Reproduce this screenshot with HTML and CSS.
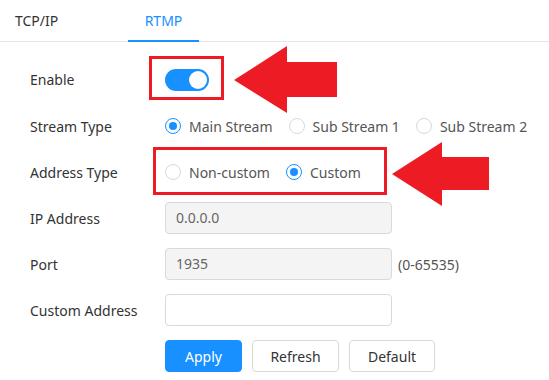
FILE: index.html
```html
<!DOCTYPE html>
<html>
<head>
<meta charset="utf-8">
<link rel="stylesheet" href="styles.css">
</head>
<body>
<div class="page">
  <div class="tabs">
    <div class="tab tab-first">TCP/IP</div>
    <div class="tab tab-active">RTMP</div>
  </div>
  <div class="form">
    <div class="row row-first">
      <div class="label">Enable</div>
      <div class="control"><span class="switch"><span class="knob"></span></span></div>
    </div>
    <div class="row">
      <div class="label">Stream Type</div>
      <div class="control radios">
        <span class="radio checked"><span class="dot"></span></span><span class="rtext">Main Stream</span>
        <span class="radio"></span><span class="rtext">Sub Stream 1</span>
        <span class="radio"></span><span class="rtext">Sub Stream 2</span>
      </div>
    </div>
    <div class="row">
      <div class="label">Address Type</div>
      <div class="control radios">
        <span class="radio"></span><span class="rtext">Non-custom</span>
        <span class="radio checked"><span class="dot"></span></span><span class="rtext">Custom</span>
      </div>
    </div>
    <div class="row">
      <div class="label">IP Address</div>
      <div class="control"><div class="input disabled">0.0.0.0</div></div>
    </div>
    <div class="row">
      <div class="label">Port</div>
      <div class="control"><div class="input disabled">1935</div><span class="hint">(0-65535)</span></div>
    </div>
    <div class="row">
      <div class="label">Custom Address</div>
      <div class="control"><div class="input"></div></div>
    </div>
    <div class="row buttons-row">
      <div class="label"></div>
      <div class="control buttons">
        <button class="btn btn-primary">Apply</button>
        <button class="btn">Refresh</button>
        <button class="btn">Default</button>
      </div>
    </div>
  </div>
  <svg class="annot" width="549" height="380" viewBox="0 0 549 380">
    <rect x="150.5" y="57.5" width="72" height="41" fill="none" stroke="#ed1c24" stroke-width="3"/>
    <rect x="154.5" y="148.5" width="231" height="45" fill="none" stroke="#ed1c24" stroke-width="3"/>
    <polygon points="234,80 287,46 287,62 337,62 337,97 287,97 287,113" fill="#ed1c24"/>
    <polygon points="392,174 442,142 442,157 489,157 489,190 442,190 442,206" fill="#ed1c24"/>
  </svg>
</div>
</body>
</html>
```

FILE: styles.css
```css
* { box-sizing: border-box; }
html, body { margin: 0; padding: 0; background: #fff; }
body {
  font-family: "Noto Sans", "Open Sans", sans-serif;
  font-size: 14px;
  color: #333;
}
.page { position: relative; width: 549px; height: 380px; overflow: hidden; }
.tabs {
  display: flex;
  height: 42px;
  border-bottom: 1px solid #e8e8e8;
  gap: 55px;
}
.tab {
  height: 42px;
  line-height: 42px;
  text-align: center;
  color: #333;
}
.tab-first { width: 73px; }
.tab-active {
  width: 71px;
  color: #1890ff;
  border-bottom: 2px solid #1890ff;
}
.form { padding-top: 14px; }
.row {
  display: flex;
  align-items: center;
  height: 46px;
}
.row-first { height: 47px; }
.label { width: 165px; padding-left: 30px; color: #333; }
.control { display: flex; align-items: center; }
.switch {
  position: relative;
  display: inline-block;
  width: 44px;
  height: 22px;
  border-radius: 11px;
  background: #1890ff;
}
.knob {
  position: absolute;
  top: 2px;
  right: 2px;
  width: 18px;
  height: 18px;
  border-radius: 50%;
  background: #fff;
}
.radio {
  position: relative;
  display: inline-block;
  width: 16px;
  height: 16px;
  border: 1px solid #d9d9d9;
  border-radius: 50%;
  background: #fff;
}
.radio.checked { border-color: #1890ff; }
.dot {
  position: absolute;
  left: 3px;
  top: 3px;
  width: 8px;
  height: 8px;
  border-radius: 50%;
  background: #1890ff;
}
.rtext { margin-left: 8px; margin-right: 16px; color: #555; }
.input {
  width: 227px;
  height: 32px;
  border: 1px solid #d9d9d9;
  border-radius: 4px;
  padding: 0 10px;
  line-height: 30px;
  color: #666;
  background: #fff;
}
.input.disabled { background: #f4f4f4; }
.hint { margin-left: 6px; color: #555; }
.buttons { gap: 10px; }
.btn {
  height: 32px;
  padding: 0;
  border: 1px solid #d9d9d9;
  border-radius: 4px;
  background: #fff;
  font-family: inherit;
  font-size: 14px;
  color: #333;
}
.btn:nth-child(1) { width: 77px; }
.btn:nth-child(2) { width: 87px; }
.btn:nth-child(3) { width: 86px; }
.btn-primary { background: #1890ff; border-color: #1890ff; color: #fff; }
.annot { position: absolute; left: 0; top: 0; pointer-events: none; }
```
